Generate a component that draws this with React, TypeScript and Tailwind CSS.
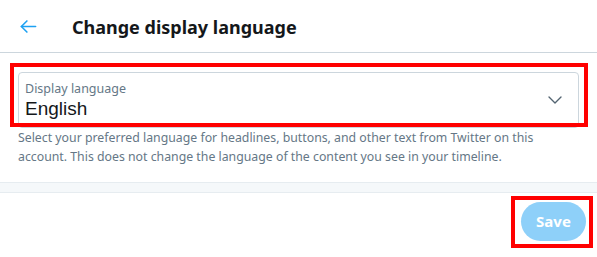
import React from "react";

export default function App() {
  return (
    <div className="w-[597px] h-[257px] bg-white overflow-hidden" style={{ fontFamily: '"Noto Sans", "Open Sans", sans-serif' }}>
      <div className="h-[53px] flex items-center border-b border-[#ccd6dd]">
        <div className="w-[72px] pl-[19px] flex items-center">
          <svg width="19" height="19" viewBox="0 0 24 24" fill="none" stroke="#1da1f2" strokeWidth="2" strokeLinecap="round" strokeLinejoin="round">
            <path d="M21 12H3" />
            <path d="M10 5l-7 7 7 7" />
          </svg>
        </div>
        <div className="text-[18px] font-bold text-[#14171a] leading-none pt-[2px]">Change display language</div>
      </div>
      <div className="px-[18px] pt-[19px]">
        <div className="relative">
          <div className="absolute -left-[8px] -top-[9px] -right-[9px] h-[64px] border-[4px] border-[#ff0000] pointer-events-none" />
          <div className="h-[56px] rounded-[4px] border border-[#ccd6dd] flex items-center pl-[6px] pr-[14px]">
            <div className="flex-1 pt-[2px]">
              <div className="text-[12.5px] text-[#657786] leading-[16px]">Display language</div>
              <div className="text-[19px] text-[#14171a] leading-[24px]" style={{ fontFamily: '"Liberation Sans", Arial, sans-serif' }}>English</div>
            </div>
            <svg width="18" height="18" viewBox="0 0 24 24" fill="none" stroke="#536471" strokeWidth="1.8" strokeLinecap="round" strokeLinejoin="round">
              <path d="M4 8l8 8 8-8" />
            </svg>
          </div>
        </div>
        <p className="text-[12.3px] leading-[19px] text-[#657786]">
          Select your preferred language for headlines, buttons, and other text from Twitter on this account. This does not change the language of the content you see in your timeline.
        </p>
      </div>
      <div className="mt-[16px] h-[11px] bg-[#f5f8fa] border-y border-[#e6ecf0]" />
      <div className="flex justify-end pr-[11px] pt-[9px]">
        <div className="relative">
          <div className="absolute -left-[10px] -top-[6px] -right-[7px] -bottom-[7px] border-[4px] border-[#ff0000]" />
          <button className="w-[65px] h-[39px] rounded-full bg-[#8ed0f9] text-white font-bold text-[15px]">Save</button>
        </div>
      </div>
    </div>
  );
}
